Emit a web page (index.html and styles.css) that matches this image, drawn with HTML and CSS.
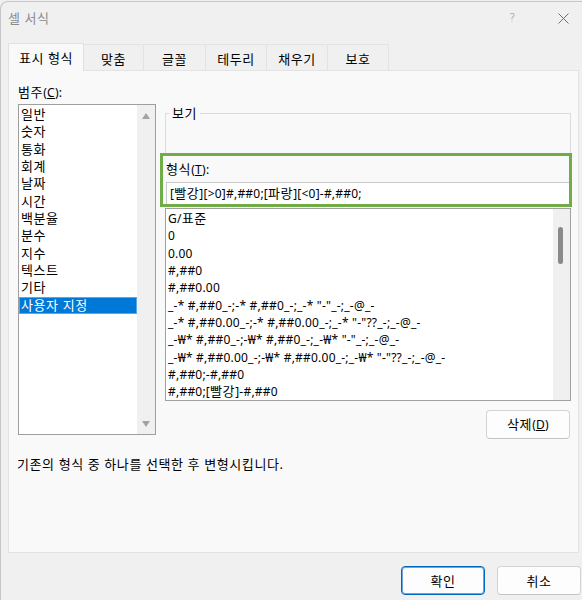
FILE: index.html
```html
<!DOCTYPE html>
<html lang="ko">
<head>
<meta charset="utf-8">
<title>셀 서식</title>
<link rel="stylesheet" href="styles.css">
</head>
<body>
<div class="window">
  <div class="titlebar">
    <span class="title">셀 서식</span>
    <span class="help">?</span>
    <span class="close"><svg width="11" height="11" viewBox="0 0 11 11"><path d="M0.5 0.5 L10.5 10.5 M10.5 0.5 L0.5 10.5" stroke="#6e6e6e" stroke-width="1" fill="none"/></svg></span>
  </div>
  <div class="tabs">
    <div class="tab active w76">표시 형식</div>
    <div class="tab w60">맞춤</div>
    <div class="tab w62">글꼴</div>
    <div class="tab w61">테두리</div>
    <div class="tab w61">채우기</div>
    <div class="tab w61">보호</div>
  </div>
  <div class="panel">
    <div class="top-row">
      <div class="cat-col">
        <div class="label">범주<span class="l">(<u>C</u>):</span></div>
        <div class="listbox">
          <div class="items cat-items">
            <div class="item">일반</div>
            <div class="item">숫자</div>
            <div class="item">통화</div>
            <div class="item">회계</div>
            <div class="item">날짜</div>
            <div class="item">시간</div>
            <div class="item">백분율</div>
            <div class="item">분수</div>
            <div class="item">지수</div>
            <div class="item">텍스트</div>
            <div class="item">기타</div>
            <div class="item selected">사용자 지정</div>
          </div>
          <div class="vscroll arrows">
            <span class="arrow up"></span>
            <span class="arrow down"></span>
          </div>
        </div>
      </div>
      <div class="right-col">
        <fieldset class="preview">
          <legend>보기</legend>
          <div class="preview-body"></div>
        </fieldset>
        <div class="highlight">
          <div class="label">형식<span class="l">(<u>T</u>):</span></div>
          <div class="input code">[<span class="k">빨강</span>][&gt;0]#,##0;[<span class="k">파랑</span>][&lt;0]-#,##0;</div>
        </div>
        <div class="fmt-list">
          <div class="items fmt-items code">
            <div class="item">G/<span class="k">표준</span></div>
            <div class="item">0</div>
            <div class="item">0.00</div>
            <div class="item">#,##0</div>
            <div class="item">#,##0.00</div>
            <div class="item">_-* #,##0_-;-* #,##0_-;_-* "-"_-;_-@_-</div>
            <div class="item">_-* #,##0.00_-;-* #,##0.00_-;_-* "-"??_-;_-@_-</div>
            <div class="item">_-₩* #,##0_-;-₩* #,##0_-;_-₩* "-"_-;_-@_-</div>
            <div class="item">_-₩* #,##0.00_-;-₩* #,##0.00_-;_-₩* "-"??_-;_-@_-</div>
            <div class="item">#,##0;-#,##0</div>
            <div class="item">#,##0;[<span class="k">빨강</span>]-#,##0</div>
          </div>
          <div class="vscroll"><div class="thumb"></div></div>
        </div>
        <div class="btn-row">
          <button class="btn del">삭제<span class="l">(<u>D</u>)</span></button>
        </div>
      </div>
    </div>
    <div class="desc">기존의 형식 중 하나를 선택한 후 변형시킵니다.</div>
  </div>
  <div class="footer">
    <button class="btn primary">확인</button>
    <button class="btn">취소</button>
  </div>
</div>
</body>
</html>
```
FILE: styles.css
```css
* { box-sizing: border-box; }
html, body {
  margin: 0;
  padding: 0;
  width: 582px;
  height: 600px;
  overflow: hidden;
  background: #f0f0f0;
}
body {
  font-family: "Noto Sans", "Noto Sans CJK KR", sans-serif;
  font-size: 13px;
  letter-spacing: 0.6px;
  color: #000;
}
.l {
  font-size: 12px;
  letter-spacing: 0.3px;
}
.code {
  font-size: 12px;
  letter-spacing: 0.22px;
}
.k {
  font-size: 13px;
  letter-spacing: 0.6px;
}
.window {
  height: 601px;
  margin-top: 1px;
  border-top: 1px solid #c6c6c6;
  border-left: 1px solid #c6c6c6;
  border-top-left-radius: 8px;
  background: #f0f0f0;
}
.titlebar {
  height: 41px;
  display: flex;
  align-items: flex-start;
  padding-top: 7px;
  padding-left: 7px;
  line-height: 18px;
}
.title {
  color: #8c8c8c;
  flex: 1;
}
.help {
  color: #8c8c8c;
  width: 12px;
  margin-right: 37px;
  font-family: "DejaVu Sans", sans-serif;
  font-size: 12px;
  font-weight: 300;
}
.close {
  width: 24px;
  padding-top: 4px;
  line-height: 0;
}
.tabs {
  display: flex;
  align-items: flex-end;
  margin-left: 7px;
  height: 27px;
  position: relative;
  z-index: 1;
}
.tab {
  height: 26px;
  line-height: 26px;
  text-align: center;
  border-top: 1px solid #e3e3e3;
  border-right: 1px solid #e3e3e3;
  background: #f0f0f0;
  padding-top: 1px;
}
.tab.active {
  height: 28px;
  margin-bottom: -1px;
  background: #f9f9f9;
  border-left: 1px solid #e0e0e0;
  border-top: 1px solid #e0e0e0;
  border-right: 1px solid #e0e0e0;
  line-height: 28px;
  padding-top: 0;
}
.w76 { width: 76px; }
.w60 { width: 60px; }
.w62 { width: 62px; }
.w61 { width: 61px; }

.panel {
  margin-left: 7px;
  width: 571px;
  height: 483px;
  background: #f9f9f9;
  border: 1px solid #e3e3e3;
  padding: 13px 0 0 9px;
}
.top-row {
  display: flex;
  align-items: flex-start;
}
.label {
  line-height: 16px;
  height: 16px;
}
.cat-col .label { margin-bottom: 4px; }
.listbox {
  width: 138px;
  height: 331px;
  border: 1px solid #9e9e9e;
  background: #fff;
  display: flex;
}
.items {
  flex: 1;
  padding-top: 1px;
  min-width: 0;
}
.item {
  height: 17.35px;
  line-height: 17.35px;
  padding-left: 2px;
  white-space: nowrap;
}
.item.selected {
  background: #0078d7;
  color: #fff;
  box-shadow: inset 0 0 0 1px #5aa7e8;
}
.vscroll {
  width: 18px;
  background: #f0f0f0;
  position: relative;
}
.arrows {
  display: flex;
  flex-direction: column;
  justify-content: space-between;
  align-items: center;
  padding: 8px 0 7px;
}
.arrow {
  width: 0;
  height: 0;
  border-left: 4.5px solid transparent;
  border-right: 4.5px solid transparent;
}
.arrow.up { border-bottom: 6px solid #a3a3a3; }
.arrow.down { border-top: 6px solid #a3a3a3; }

.right-col {
  width: 406px;
  margin-left: 9px;
  margin-top: 21px;
}
.preview {
  margin: 0;
  padding: 0;
  border: 1px solid #dcdcdc;
  border-bottom: none;
  min-width: 0;
}
.preview legend {
  padding: 0 3px;
  margin-left: 3px;
  line-height: 16px;
}
.preview-body { height: 32px; }
.highlight {
  margin-left: -5px;
  margin-right: -1px;
  border: 3px solid #70ad47;
  height: 54px;
  padding: 5px 0 0 3px;
  background: #f9f9f9;
}
.highlight .label { margin-bottom: 5px; }
.input {
  height: 22px;
  background: #fff;
  border: 1px solid #c9c9c9;
  border-right: none;
  border-bottom: none;
  line-height: 20px;
  padding-left: 3px;
  white-space: nowrap;
}
.fmt-list {
  margin-top: 1px;
  height: 193px;
  border: 1px solid #a0a0a0;
  background: #fff;
  display: flex;
}
.fmt-list .vscroll { width: 17px; }
.thumb {
  margin-left: 5px;
  margin-top: 18px;
  width: 5px;
  height: 37px;
  background: #8a8a8a;
  border-radius: 3px;
}
.btn-row {
  display: flex;
  justify-content: flex-end;
  margin-top: 9px;
  padding-right: 1px;
}
.btn {
  font: inherit;
  letter-spacing: inherit;
  color: #000;
  height: 29px;
  width: 84px;
  background: #fdfdfd;
  border: 1px solid #d3d3d3;
  border-bottom-color: #c4c4c4;
  border-radius: 4px;
  padding: 0;
  line-height: 26px;
}
.desc {
  margin-top: 17px;
  margin-left: -1px;
  line-height: 16px;
}
.footer {
  display: flex;
  justify-content: flex-end;
  gap: 12px;
  margin-top: 13px;
  padding-right: 1px;
}
.btn.primary {
  border: 1px solid #0067c0;
  box-shadow: inset 0 0 0 1px #6aa6dc;
}
```
